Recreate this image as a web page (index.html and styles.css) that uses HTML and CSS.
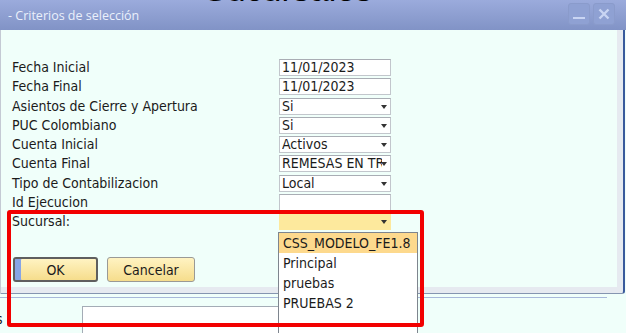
FILE: index.html
```html
<!DOCTYPE html>
<html lang="es">
<head>
  <meta charset="UTF-8" />
  <title>Criterios de selección</title>
  <link rel="stylesheet" href="styles.css">
</head>
<body>
  <div class="screen">

    <!-- heading of the window behind -->
    <div class="heading">Sucursales</div>

    <!-- Dialog -->
    <div class="dialog">
      <div class="titlebar">
        <span class="title">- Criterios de selección</span>
        <div class="win-btns">
          <span class="win-btn">
            <svg width="14" height="14" viewBox="0 0 14 14"><rect x="1" y="10" width="12" height="2" fill="#c9d5f3"/></svg>
          </span>
          <span class="win-btn">
            <svg width="14" height="14" viewBox="0 0 14 14"><path d="M2.5 2.5 L11.5 11.5 M11.5 2.5 L2.5 11.5" stroke="#c9d5f3" stroke-width="2.4"/></svg>
          </span>
        </div>
      </div>

      <div class="frame">
        <div class="content">
          <div class="form">
            <label>Fecha Inicial</label>
            <div class="field">11/01/2023</div>
            <label>Fecha Final</label>
            <div class="field">11/01/2023</div>
            <label>Asientos de Cierre y Apertura</label>
            <div class="field sel"><span class="val">Si</span></div>
            <label>PUC Colombiano</label>
            <div class="field sel"><span class="val">Si</span></div>
            <label>Cuenta Inicial</label>
            <div class="field sel"><span class="val">Activos</span></div>
            <label>Cuenta Final</label>
            <div class="field sel"><span class="val">REMESAS EN TRANSITO</span></div>
            <label>Tipo de Contabilizacion</label>
            <div class="field sel"><span class="val">Local</span></div>
            <label>Id Ejecucion</label>
            <div class="field"></div>
            <label>Sucursal:</label>
            <div class="field sel active"><span class="val"></span></div>
          </div>

          <div class="actions">
            <button class="btn primary">OK</button>
            <button class="btn">Cancelar</button>
          </div>
        </div>
      </div>
    </div>

    <!-- window behind the dialog -->
    <div class="behind">
      <div class="back-edge"></div>
      <div class="back-row">
        <span class="cut">s</span>
        <div class="back-input"></div>
      </div>
    </div>

    <!-- open list of Sucursal -->
    <ul class="dropdown">
      <li class="current">CSS_MODELO_FE1.8</li>
      <li>Principal</li>
      <li>pruebas</li>
      <li>PRUEBAS 2</li>
    </ul>

    <!-- red mark -->
    <div class="highlight"></div>
  </div>
</body>
</html>
```

FILE: styles.css
```css
body {
  margin: 0;
  background: #f0fffa;
  font-family: "DejaVu Sans Condensed", "DejaVu Sans", sans-serif;
  font-size: 14px;
  color: #1b1b1b;
  overflow: hidden;
}

.screen {
  position: relative;
  width: 626px;
  height: 333px;
  overflow: hidden;
}

.heading {
  position: absolute;
  left: 204px;
  top: -28px;
  font-family: "Liberation Sans", Arial, sans-serif;
  font-size: 34px;
  line-height: 34px;
  color: #000;
  z-index: 2;
}

/* Dialog */
.titlebar {
  height: 30px;
  display: flex;
  align-items: center;
  justify-content: space-between;
  background: linear-gradient(to bottom, #9babdc, #8193c6);
  padding: 0 11px 0 8px;
}

.title {
  font-family: "Open Sans", sans-serif;
  font-size: 12.5px;
  color: #eaf0fb;
  margin-top: 1px;
}

.win-btns {
  display: flex;
  gap: 3px;
  margin-top: -2px;
}

.win-btn {
  width: 20px;
  height: 20px;
  border: 1px solid #8a9bcb;
  border-radius: 3px;
  background: #8fa1d3;
  display: flex;
  align-items: center;
  justify-content: center;
}

.frame {
  width: 625px;
  box-sizing: border-box;
  background: #e6eaf0;
  border-left: 1px solid #c4cad4;
  border-right: 2px solid #3a5a9c;
  border-bottom: 1px solid #8595b0;
  border-bottom-right-radius: 3px;
  padding: 0 6px 6px 0;
}

.content {
  height: 257px;
  box-sizing: border-box;
  background: #f0fffa;
  padding: 29px 0 0 11px;
}

.form {
  display: grid;
  grid-template-columns: 267px 112px;
  grid-auto-rows: 17px;
  row-gap: 2.3px;
}

.form label {
  line-height: 17px;
  white-space: nowrap;
}

.field {
  position: relative;
  box-sizing: border-box;
  background: #fff;
  border: 1px solid #c2c6cc;
  border-top-color: #a9adb4;
  line-height: 15px;
  padding-left: 2px;
  white-space: nowrap;
  overflow: hidden;
}

.field.sel .val {
  display: block;
  overflow: hidden;
  margin-right: 8px;
}

.field.sel::after {
  content: "";
  position: absolute;
  right: 3px;
  top: 6px;
  border-left: 3.5px solid transparent;
  border-right: 3.5px solid transparent;
  border-top: 4px solid #333;
}

.field.active {
  background: #fde99d;
  border-color: #fde99d;
  border-top-color: #f4efd8;
}

.actions {
  display: flex;
  gap: 9px;
  margin-top: 27px;
  padding-left: 1px;
}

.btn {
  height: 25px;
  width: 88px;
  box-sizing: border-box;
  font-family: inherit;
  font-size: 14px;
  color: #1b1b1b;
  background: linear-gradient(to bottom, #fff3c2, #f6dd8c);
  border: 1px solid #9a9a96;
  border-radius: 3px;
  padding: 0;
}

.btn.primary {
  width: 85px;
  border: 2px solid #5f5f5f;
  box-shadow: inset 6px 0 0 #87a5e6;
}

/* window behind */
.behind {
  padding-top: 3px;
}

.back-edge {
  width: 607px;
  height: 1px;
  background: #a8b8da;
}

.back-row {
  display: flex;
  align-items: flex-start;
  padding-top: 8px;
}

.cut {
  margin-left: -4px;
  margin-top: 5px;
  width: 86px;
  line-height: 17px;
}

.back-input {
  width: 260px;
  height: 40px;
  background: #fff;
  border-top: 1px solid #a4acb6;
  border-left: 1px solid #a4acb6;
}

/* list */
.dropdown {
  position: absolute;
  left: 278px;
  top: 232px;
  width: 140px;
  height: 110px;
  box-sizing: border-box;
  margin: 0;
  padding: 0;
  list-style: none;
  background: #fff;
  border: 1px solid #7e858e;
  z-index: 3;
}

.dropdown li {
  height: 20px;
  line-height: 20px;
  padding-left: 4px;
  white-space: nowrap;
}

.dropdown li.current {
  background: #fdd98d;
}

.highlight {
  position: absolute;
  left: 7px;
  top: 210px;
  width: 417px;
  height: 117px;
  box-sizing: border-box;
  border: 4px solid #f20000;
  border-radius: 3px;
  z-index: 4;
}
```
